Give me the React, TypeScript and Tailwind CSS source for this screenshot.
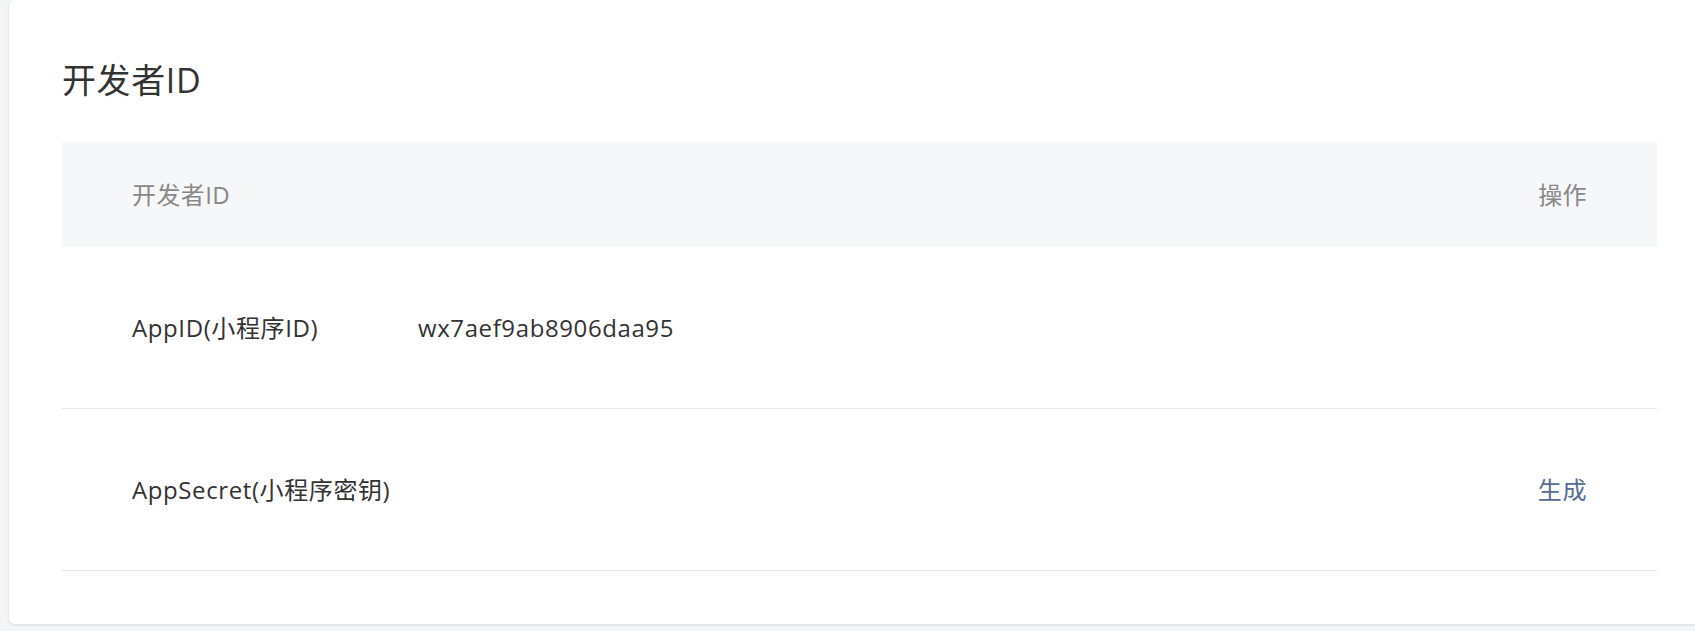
import React from 'react';

const rows = [
  { label: 'AppID(小程序ID)', value: 'wx7aef9ab8906daa95', action: '' },
  { label: 'AppSecret(小程序密钥)', value: '', action: '生成' },
];

export default function App() {
  return (
    <div
      className="h-[631px] w-full overflow-hidden bg-[#f3f4f6] pl-[9px]"
      style={{ fontFamily: '"Open Sans", "Noto Sans CJK SC", sans-serif' }}
    >
      <div className="mr-[-20px] h-[624px] rounded-[6px] bg-white pt-[58px] pl-[53px] pr-[58px] shadow-[0_1px_3px_rgba(0,0,0,0.12)]">
        <h2 className="h-[44px] text-[34px] leading-[44px] font-normal tracking-[0.6px] text-[#333333]">开发者ID</h2>

        <div className="mt-[40px]">
          {/* Header */}
          <div className="flex h-[105px] items-center bg-[#f6f7f9] px-[70px] text-[24px] tracking-[0.4px] text-[#888888]">
            <span className="flex-1">开发者ID</span>
            <span>操作</span>
          </div>

          {rows.map((row) => (
            <div
              key={row.label}
              className="flex h-[162px] items-center border-b border-[#e7e7eb] px-[70px] text-[24px] tracking-[0.6px] text-[#333333]"
            >
              <span className="w-[286px] shrink-0">{row.label}</span>
              <span className="flex-1">{row.value}</span>
              {row.action && <a className="cursor-pointer text-[#576b95]">{row.action}</a>}
            </div>
          ))}
        </div>
      </div>
    </div>
  );
}
